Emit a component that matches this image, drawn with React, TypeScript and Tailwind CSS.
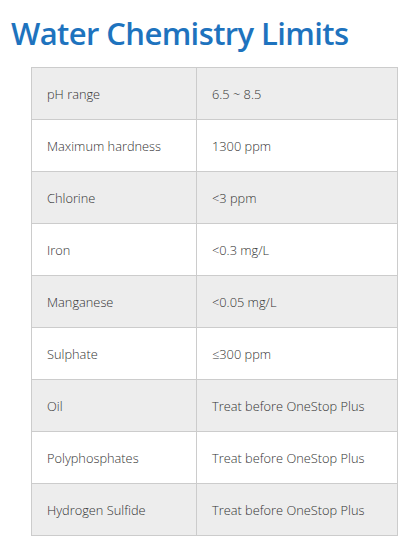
import React from "react";

const rows: [string, string][] = [
  ["pH range", "6.5 ~ 8.5"],
  ["Maximum hardness", "1300 ppm"],
  ["Chlorine", "<3 ppm"],
  ["Iron", "<0.3 mg/L"],
  ["Manganese", "<0.05 mg/L"],
  ["Sulphate", "≤300 ppm"],
  ["Oil", "Treat before OneStop Plus"],
  ["Polyphosphates", "Treat before OneStop Plus"],
  ["Hydrogen Sulfide", "Treat before OneStop Plus"],
];

export default function App() {
  return (
    <div className="w-[410px] h-[545px] bg-white overflow-hidden" style={{ fontFamily: '"Open Sans", sans-serif' }}>
      <h1 className="pl-[11px] pt-[13px] text-[31px] leading-[40px] font-semibold text-[#1e73be] tracking-[-0.6px]">
        Water Chemistry Limits
      </h1>
      <div className="pl-[31px] pt-[14px]">
        <table className="border-collapse w-[366px] table-fixed">
          <colgroup>
            <col className="w-[165px]" />
            <col className="w-[201px]" />
          </colgroup>
          <tbody>
            {rows.map(([k, v], i) => (
              <tr key={k} className={i % 2 === 0 ? "bg-[#ededed]" : "bg-white"}>
                <td className="border border-[#cccccc] h-[52px] pl-[15px] pt-[2px] text-[12.8px] font-light text-[#333333] align-middle">
                  {k}
                </td>
                <td className="border border-[#cccccc] h-[52px] pl-[15px] pt-[2px] text-[12.8px] font-light text-[#333333] align-middle">
                  {v}
                </td>
              </tr>
            ))}
          </tbody>
        </table>
      </div>
    </div>
  );
}
